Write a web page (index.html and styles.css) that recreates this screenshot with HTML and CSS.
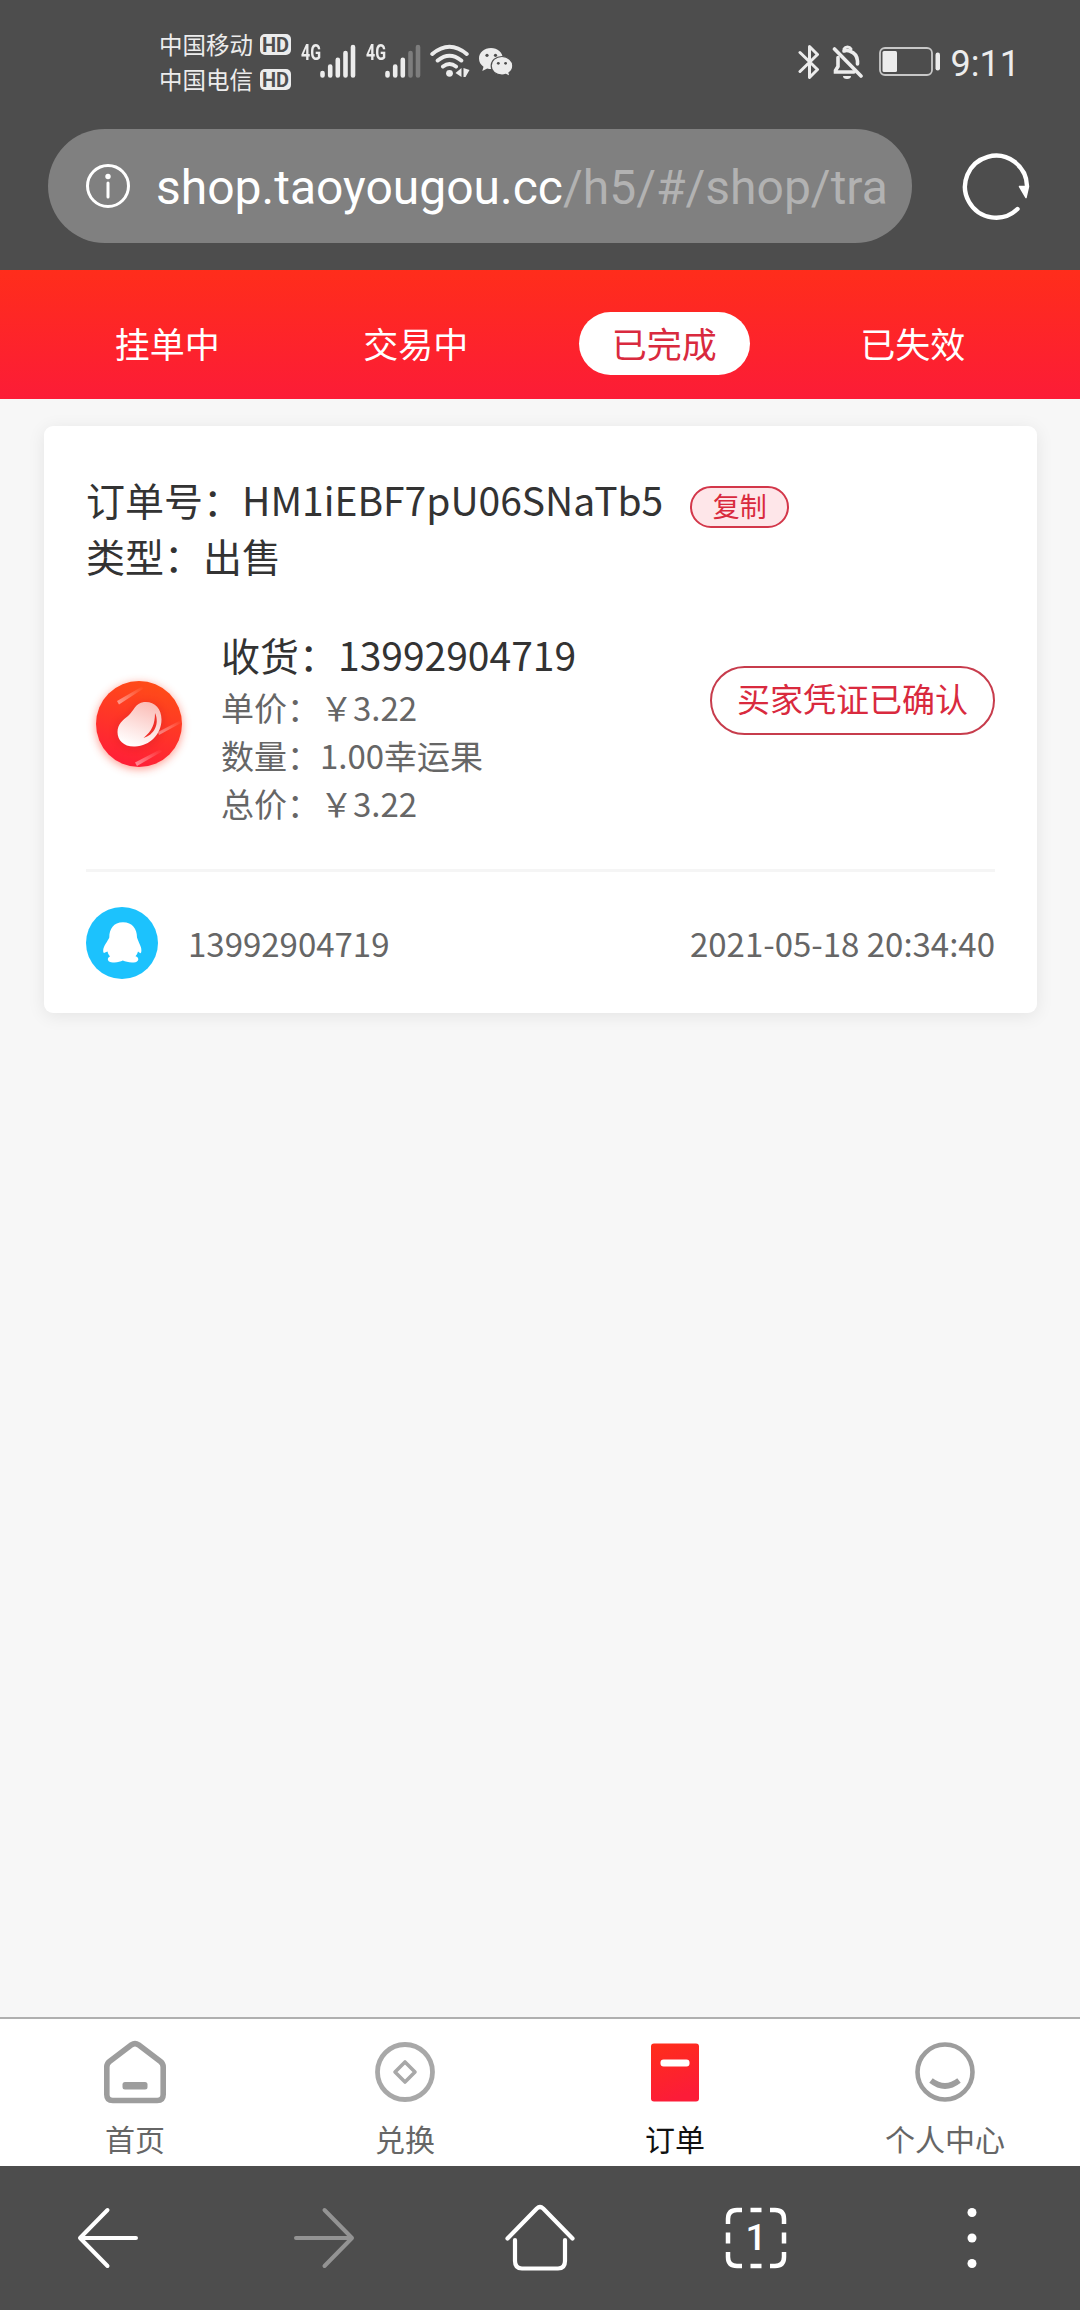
FILE: index.html
```html
<!DOCTYPE html>
<html lang="zh-CN">
<head>
<meta charset="utf-8">
<title>订单</title>
<link rel="stylesheet" href="styles.css">
</head>
<body>
<div class="screen">
  <header class="status">
    <div class="carriers">
      <div class="carrier">中国移动<span class="hd">HD</span></div>
      <div class="carrier">中国电信<span class="hd">HD</span></div>
    </div>
    <div class="signal"><span class="net">4G</span>
      <svg width="36" height="34" viewBox="0 0 36 34" stroke="#ececec" stroke-width="4.6" stroke-linecap="round"><path d="M2.5 29v2.5M10.2 22.5v9M17.8 15.8v15.7M25.5 9v22.5M33 3v28.5"/></svg>
    </div>
    <div class="signal"><span class="net">4G</span>
      <svg width="36" height="34" viewBox="0 0 36 34" stroke="#ececec" stroke-width="4.6" stroke-linecap="round"><path d="M2.5 29v2.5M10.2 22.5v9M17.8 15.8v15.7"/><path d="M25.5 9v22.5M33 3v28.5" stroke="#7d7d7d"/></svg>
    </div>
    <svg class="wifi" width="40" height="34" viewBox="0 0 40 34" fill="none" stroke="#ececec" stroke-width="4" stroke-linecap="round"><path d="M2.3 10Q19.500 -4.500 36.700 10M7.700 16.500Q19.500 7 31.300 16.500M13 22.500Q19.500 17.500 26 22.500"/><circle cx="19.500" cy="29.300" r="3.400" fill="#ececec" stroke="none"/><path d="M31.500 24v9l-6-4zM33.500 24l6 2-4 7h-2z" fill="#ececec" stroke="none"/></svg>
    <svg class="wechat" width="34" height="30" viewBox="0 0 34 30"><path d="M12 0C5.300 0 0 4.600 0 10.500c0 3.500 1.700 6.200 4.500 8.200L3.300 23l4.900-2.600c1.500.4 2.600.6 3.900.6 6 0 11.700-4.500 11.700-10.500S18.500 0 12 0z" fill="#ececec"/><path d="M23 8.500c-6.200 0-10.800 4-10.800 9.300s4.600 9.200 10.800 9.200c1.400 0 2.600-.2 3.800-.6L31 28.500l-1-3.700c2.400-1.700 3.800-4.200 3.800-7 0-5.200-4.800-9.300-10.800-9.300z" fill="#ececec" stroke="#4d4d4d" stroke-width="1.200"/><g fill="#4d4d4d"><circle cx="8" cy="7.300" r="1.600"/><circle cx="16.500" cy="7.300" r="1.600"/><circle cx="19.300" cy="15.300" r="1.400"/><circle cx="26.600" cy="15.300" r="1.400"/></g></svg>
    <div class="status-right">
      <svg width="22" height="36" viewBox="0 0 22 36" fill="none" stroke="#ececec" stroke-width="3" stroke-linejoin="round" stroke-linecap="round"><path d="M2 8.500 19.500 25.500 11.500 33.500V2.500L19.500 10.500 2 27.500"/></svg>
      <svg width="32" height="36" viewBox="0 0 32 36" fill="none" stroke="#ececec" stroke-width="3.600" stroke-linecap="round"><path d="M6 13.500V22.500L3.500 26.500V28H22M12 7Q15 5.800 18 7.200Q25 9.500 25.500 17V20"/><path d="M12 5a4 4 0 0 1 7 0" stroke-width="3"/><path d="M2.500 5 29 32"/><path d="M11 32h8a4 3 0 0 1-8 0z" fill="#ececec" stroke="none"/></svg>
      <svg class="battery" width="62" height="30" viewBox="0 0 62 30"><rect x="1" y="1" width="52" height="27" rx="5" fill="none" stroke="#c8c8c8" stroke-width="1.800"/><rect x="3.500" y="4" width="14.500" height="21" rx="1.500" fill="#ececec"/><rect x="56.500" y="5.500" width="4.500" height="18" rx="2.200" fill="#ececec"/></svg>
      <span class="clock">9:11</span>
    </div>
  </header>

  <div class="address">
    <div class="url-bar">
      <svg width="46" height="46" viewBox="0 0 46 46" fill="none" stroke="#fff"><circle cx="23" cy="23" r="20.500" stroke-width="3"/><path d="M23 20v14" stroke-width="3" stroke-linecap="round"/><circle cx="23" cy="13.500" r="2.700" fill="#fff" stroke="none"/></svg>
      <span class="url">shop.taoyougou.cc<span class="path">/h5/#/shop/tra</span></span>
    </div>
    <svg class="reload" width="70" height="70" viewBox="0 0 70 70" fill="none" stroke="#fff"><path d="M56.500 58A31 31 0 1 1 66 35" stroke-width="4.400" stroke-linecap="round"/><path d="M58.500 35.500h9L65 46.500z" fill="#fff" stroke="#fff" stroke-width="1.500" stroke-linejoin="round"/></svg>
  </div>

  <nav class="tabs">
    <span class="tab">挂单中</span>
    <span class="tab">交易中</span>
    <span class="tab active">已完成</span>
    <span class="tab">已失效</span>
  </nav>

  <main class="content">
    <section class="card">
      <div class="order-no"><span>订单号：HM1iEBF7pU06SNaTb5</span><span class="copy">复制</span></div>
      <div class="order-type">类型：出售</div>
      <div class="detail">
        <svg class="bean" width="108" height="108" viewBox="0 0 108 108">
          <defs>
            <linearGradient id="ball" x1=".65" y1="0" x2=".35" y2="1"><stop offset="0" stop-color="#ff4d17"/><stop offset="1" stop-color="#ff1e38"/></linearGradient>
            <linearGradient id="seed" x1=".7" y1="0" x2=".35" y2="1"><stop offset="0" stop-color="#fbbcb6"/><stop offset="1" stop-color="#fff"/></linearGradient>
            <linearGradient id="streak" x1="0" y1="1" x2="1" y2="0"><stop offset="0" stop-color="#fff" stop-opacity=".5"/><stop offset="1" stop-color="#fff" stop-opacity="0"/></linearGradient>
            <filter id="glow" x="-30%" y="-30%" width="160%" height="160%"><feGaussianBlur stdDeviation="4"/></filter>
          </defs>
          <circle cx="54" cy="56" r="43.500" fill="#ff4a30" opacity=".5" filter="url(#glow)"/>
          <circle cx="54" cy="54" r="43" fill="url(#ball)"/>
          <path d="M32 31 57 16.500 58.500 18.500 34 34.500z" fill="url(#streak)"/>
          <path d="M73 62 95 50.500 96 53 74 65z" fill="url(#streak)"/>
          <path d="M50 92.500 75 79.500 77 81.500 52 96z" fill="url(#streak)"/>
          <path d="M60 34C70 33 77 40 77 51C77 65 66 77 51 77.500C40 78 33 72 32.500 63C32 54 38 50 43 47C50 42 49 35.500 60 34z" fill="#b91622" opacity=".35" filter="url(#glow)"/>
          <path d="M59 32C69 31 76.500 38 76.500 49.500C76.500 64 65 76 50 76.500C39 77 32.500 70.500 32.500 62C32.500 54 38 50 43 46C49 41 50 33 59 32z" fill="url(#seed)"/>
          <path d="M70 43C75 54 69 65 58.500 68C67 61 70 54 70 43z" fill="#ef3029"/>
        </svg>
        <div class="facts">
          <div class="receiver">收货：13992904719</div>
          <div>单价：￥3.22</div>
          <div>数量：1.00幸运果</div>
          <div>总价：￥3.22</div>
        </div>
        <div class="confirm">买家凭证已确认</div>
      </div>
      <div class="meta">
        <svg width="72" height="72" viewBox="0 0 72 72"><circle cx="36" cy="36" r="36" fill="#1cc2fd"/><path d="M37 15.300C27.500 15.300 23.300 22 23.300 30.500C21.500 34.500 17.500 39 17.200 43C17 46 18 46.500 19 45.500L21.500 44.500Q22 47.500 24 49.500C21 50.500 21 54.500 25 55.200C30 56 34 55 36.800 53.600C40 55 44.500 56 49.500 55.200C53 54.500 53.500 50.500 49.500 49.300Q51.500 47 52 44.500L54.300 46.200C55.800 46 55.500 42.500 55 40.500C54.200 37.500 52 34 51 30.500C51 22 46.500 15.300 37 15.300z" fill="#fff"/></svg>
        <span class="phone">13992904719</span>
        <time>2021-05-18 20:34:40</time>
      </div>
    </section>
  </main>

  <nav class="app-nav">
    <div class="item"><svg width="64" height="64" viewBox="0 0 64 64" fill="none" stroke="#9d9d9d" stroke-width="5.600" stroke-linejoin="round"><path d="M28.500 4.800 6.500 21.500Q3.800 23.600 3.800 27V54.500Q3.800 60.500 9.800 60.500H54.200Q60.200 60.500 60.200 54.500V27Q60.200 23.600 57.500 21.500L35.500 4.800Q32 2.500 28.500 4.800z"/><rect x="19.500" y="42" width="25" height="7.500" rx="2.500" fill="#9d9d9d" stroke="none"/></svg><span>首页</span></div>
    <div class="item"><svg width="64" height="64" viewBox="0 0 64 64" fill="none" stroke="#a8a8a8" stroke-linejoin="round"><circle cx="32" cy="32" r="27.500" stroke-width="4.800"/><path d="M32 22 42 32 32 42 22 32z" stroke-width="3.600"/></svg><span>兑换</span></div>
    <div class="item current"><svg width="64" height="64" viewBox="0 0 64 64"><defs><linearGradient id="doc" x1="0" y1="0" x2=".3" y2="1"><stop offset="0" stop-color="#ff2e1a"/><stop offset="1" stop-color="#fc1c38"/></linearGradient></defs><rect x="8" y="3.500" width="48" height="58" rx="3" fill="url(#doc)"/><rect x="17.500" y="19.500" width="29" height="7" rx="3" fill="#fff"/></svg><span>订单</span></div>
    <div class="item"><svg width="64" height="64" viewBox="0 0 64 64" fill="none" stroke="#9d9d9d"><circle cx="32" cy="32" r="27.500" stroke-width="4.600"/><path d="M18 40.500Q32 51.500 46 40.500" stroke-width="5.600"/></svg><span>个人中心</span></div>
  </nav>

  <footer class="browser-nav">
    <svg width="70" height="70" viewBox="0 0 70 70" fill="none" stroke="#fff" stroke-width="4" stroke-linecap="round" stroke-linejoin="round"><path d="M63 35H7.500M34.500 7 7 35 34.500 63"/></svg>
    <svg width="70" height="70" viewBox="0 0 70 70" fill="none" stroke="#939393" stroke-width="4" stroke-linecap="round" stroke-linejoin="round"><path d="M7 35h55M35.500 7 63 35 35.500 63"/></svg>
    <svg width="76" height="70" viewBox="0 0 76 70" fill="none" stroke="#fff" stroke-width="4.200" stroke-linecap="round" stroke-linejoin="round"><path d="M5.500 35.500 34.800 5.500Q38 2.500 41.200 5.500L70.500 35.500M13 37V58Q13 65.500 20 65.500H56Q63 65.500 63 58V37"/></svg>
    <div class="windows"><svg width="62" height="62" viewBox="0 0 62 62" fill="none" stroke="#fff" stroke-width="4.500"><path d="M3 17V12Q3 3 12 3H17M45 3H50Q59 3 59 12V17M59 45V50Q59 59 50 59H45M17 59H12Q3 59 3 50V45M25.500 3h11M25.500 59h11M3 25.500v11M59 25.500v11"/></svg><span>1</span></div>
    <svg width="70" height="70" viewBox="0 0 70 70" fill="#fff"><circle cx="35" cy="9.500" r="4.500"/><circle cx="35" cy="35" r="4.500"/><circle cx="35" cy="60.500" r="4.500"/></svg>
  </footer>
</div>
</body>
</html>
```
FILE: styles.css
```css
* { box-sizing: border-box; }
body { margin: 0; font-family: "Noto Sans CJK SC", sans-serif; }
svg { display: block; flex: none; }
.screen { display: flex; flex-direction: column; width: 1080px; height: 2310px; background: #f7f7f7; white-space: nowrap; }

.status { display: flex; align-items: flex-start; height: 110px; padding: 27px 60px 0 159px; background: #4d4d4d; color: #ececec; }
.carriers { display: flex; flex-direction: column; width: 142px; }
.carrier { display: flex; align-items: center; gap: 7px; height: 35px; font-size: 23.5px; line-height: 35px; }
.hd { width: 31px; height: 21px; border-radius: 5px; background: #ececec; color: #4d4d4d; font: 700 20px/22px Roboto, sans-serif; text-align: center; }
.signal { display: flex; width: 65px; padding-top: 18px; }
.net { width: 19px; font: 700 21.5px/15px Roboto, sans-serif; transform: scaleX(.74); transform-origin: left; }
.signal svg { margin-top: -1px; }
.wifi { margin: 17px 0 0 -1px; }
.wechat { margin: 21px 0 0 9px; }
.status-right { display: flex; align-items: flex-start; margin-left: auto; padding-top: 17px; }
.status-right svg + svg { margin-left: 12px; }
.status-right svg:first-child { margin-right: 0; }
.status-right .battery { margin: 3px 0 0 15px; }
.clock { margin-left: 10px; font: 400 36px/40px Roboto, sans-serif; }

.address { display: flex; align-items: center; justify-content: space-between; height: 160px; padding: 0 49px 8px 48px; background: #4d4d4d; }
.url-bar { display: flex; align-items: center; gap: 25px; width: 864px; height: 114px; padding-left: 37px; border-radius: 57px; background: #808080; }
.url { padding-top: 3px; color: #fff; font: 400 48px/56px Roboto, sans-serif; }
.path { color: #b2b2b2; }

.tabs { display: grid; grid-template-columns: repeat(4, 1fr); align-items: center; justify-items: center; height: 129px; padding: 18px 43px 0; background: linear-gradient(#ff2d1b, #fc1c37); color: #fff; font-size: 35px; }
.tab { height: 63px; padding: 0 33px; border-radius: 32px; line-height: 61px; }
.tab.active { background: #fff; color: #d92a3e; }

.content { flex: 1; padding: 27px 43px 0 44px; }
.card { height: 587px; padding: 45px 42px 0; border-radius: 9px; background: #fff; box-shadow: 0 3px 18px rgba(0, 0, 0, .08); color: #333; font-size: 39px; line-height: 56px; }
.order-no { display: flex; align-items: flex-start; gap: 27px; height: 56px; }
.copy { width: 99px; height: 42px; margin-top: 15px; border: 2px solid #d3374a; border-radius: 21px; background: #fee6e9; color: #d92a3e; font-size: 27px; line-height: 35px; text-align: center; }
.order-type { height: 57px; }
.detail { display: flex; margin-top: 42px; height: 246px; border-bottom: 3px solid #f5f5f5; }
.bean { margin: 44px 0 0 -1px; }
.facts { flex: 1; margin-left: 28px; color: #666; font-size: 33px; line-height: 48px; }
.receiver { margin-bottom: 1px; color: #333; font-size: 39px; line-height: 56px; }
.confirm { width: 285px; height: 69px; margin-top: 40px; border: 2px solid #c73c4c; border-radius: 35px; color: #d92a3e; font-size: 33px; line-height: 60px; text-align: center; }
.meta { display: flex; align-items: center; margin-top: 35px; color: #666; font-size: 33px; line-height: 48px; }
.phone { margin-left: 30px; }
.meta time { margin-left: auto; }

.app-nav { display: grid; grid-template-columns: repeat(4, 1fr); height: 149px; border-top: 2px solid #b0b0b0; background: #fff; }
.item { display: flex; flex-direction: column; align-items: center; padding-top: 21px; color: #666; font-size: 30px; line-height: 44px; gap: 12px; }
.current { color: #111; }

.browser-nav { display: grid; grid-template-columns: repeat(5, 1fr); place-items: center; height: 144px; background: #4d4d4d; }
.windows { display: grid; place-items: center; color: #fff; }
.windows > * { grid-area: 1 / 1; }
.windows span { font: 500 37px/40px Roboto, sans-serif; }
```
